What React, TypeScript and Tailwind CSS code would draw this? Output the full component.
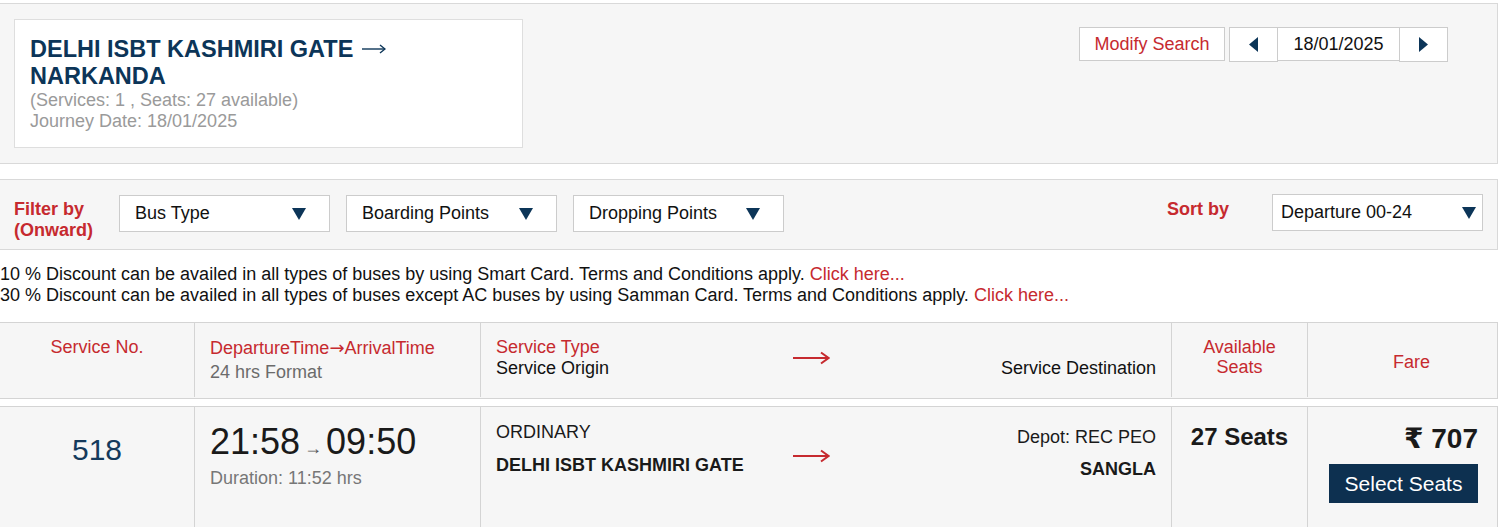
import React from 'react';

const NAVY = 'text-[#0c3558]';

const Caret = () => (
  <svg width="14" height="12" viewBox="0 0 14 12" className="shrink-0">
    <polygon points="0,0 14,0 7,12" fill="#0c3558" />
  </svg>
);

const LongArrow = () => (
  <svg width="37" height="14" viewBox="0 0 37 14" className="shrink-0">
    <line x1="0" y1="7" x2="35" y2="7" stroke="#c62a2f" strokeWidth="2" />
    <polyline points="28,1.5 35.5,7 28,12.5" fill="none" stroke="#c62a2f" strokeWidth="2" />
  </svg>
);

const Select = ({ label, pad = 'pl-[15px] pr-[23px]' }: { label: string; pad?: string }) => (
  <div className={`w-[211px] h-[37px] bg-white border border-[#cccccc] flex items-center justify-between ${pad} text-[18px] text-[#111]`}>
    <span>{label}</span>
    <Caret />
  </div>
);

const App = () => {
  return (
    <div className="w-[1501px] min-h-[527px] bg-white pt-[3px] font-['Liberation_Sans',Arial,'DejaVu_Sans',sans-serif] text-[18px] leading-[21px]">
      {/* search summary */}
      <div className="w-[1498px] h-[161px] bg-[#f6f6f6] border-y border-r border-[#d9d9d9] flex justify-between pl-[14px] pt-[15px] pr-[49px]">
        <div className="w-[509px] h-[129px] bg-white border border-[#dedede] px-[15px] pt-[16px]">
          <h1 className={`text-[23.5px] leading-[27px] font-bold ${NAVY}`}>
            DELHI ISBT KASHMIRI GATE{' '}
            <svg width="24" height="10" viewBox="0 0 24 10" className="inline-block align-[3px] ml-[2px]">
              <line x1="0" y1="5" x2="23" y2="5" stroke="#0c3558" strokeWidth="1.4" />
              <polyline points="18,1 23,5 18,9" fill="none" stroke="#0c3558" strokeWidth="1.4" />
            </svg>{' '}
            NARKANDA
          </h1>
          <p className="text-[#9a9a9a]">(Services: 1 , Seats: 27 available)</p>
          <p className="text-[#9a9a9a]">Journey Date: 18/01/2025</p>
        </div>
        <div className="flex items-start gap-[4px] pt-[8px]">
          <button className="w-[146px] h-[34px] bg-white border border-[#cccccc] text-[#c62a2f] text-[18px]">
            Modify Search
          </button>
          <div className="flex items-start">
            <button className="w-[49px] h-[35px] bg-white border border-[#cccccc] flex items-center justify-center">
              <svg width="9" height="15" viewBox="0 0 9 15"><polygon points="9,0 9,15 0,7.5" fill="#0c3558" /></svg>
            </button>
            <div className="w-[121px] h-[34px] bg-white border-y border-[#cccccc] flex items-center justify-center text-[#111]">
              18/01/2025
            </div>
            <button className="w-[49px] h-[35px] bg-white border border-[#cccccc] flex items-center justify-center">
              <svg width="9" height="15" viewBox="0 0 9 15"><polygon points="0,0 0,15 9,7.5" fill="#0c3558" /></svg>
            </button>
          </div>
        </div>
      </div>

      {/* filter bar */}
      <div className="mt-[15px] w-[1498px] h-[71px] bg-[#f6f6f6] border-y border-r border-[#d9d9d9] flex justify-between pl-[14px] pr-[14px] pt-[15px]">
        <div className="flex items-start">
          <div className="w-[105px] mt-[4px] font-bold text-[#c62a2f]">
            Filter by
            <br />
            (Onward)
          </div>
          <div className="flex gap-[16px]">
            <Select label="Bus Type" />
            <Select label="Boarding Points" />
            <Select label="Dropping Points" />
          </div>
        </div>
        <div className="flex items-start">
          <div className="w-[105px] mt-[4px] font-bold text-[#c62a2f]">Sort by</div>
          <div className="-mt-[1px]">
            <Select label="Departure 00-24" pad="pl-[8px] pr-[6px]" />
          </div>
        </div>
      </div>

      {/* discount notes */}
      <div className="mt-[14px] text-[#111]">
        <p>
          10 % Discount can be availed in all types of buses by using Smart Card. Terms and Conditions apply.{' '}
          <a className="text-[#c62a2f]">Click here...</a>
        </p>
        <p>
          30 % Discount can be availed in all types of buses except AC buses by using Samman Card. Terms and Conditions apply.{' '}
          <a className="text-[#c62a2f]">Click here...</a>
        </p>
      </div>

      {/* table header */}
      <div className="mt-[16px] w-[1498px] h-[77px] bg-[#f6f6f6] border-y border-r border-[#d4d4d4] grid grid-cols-[194px_286px_691px_136px_1fr] items-start">
        <div className="h-[74px] pt-[14px] text-center text-[#c62a2f]">Service No.</div>
        <div className="h-[74px] border-l border-[#d4d4d4] pt-[14px] pl-[15px]">
          <div className="text-[#c62a2f]">
            DepartureTime<span className="font-['DejaVu_Sans'] text-[18px]">→</span>ArrivalTime
          </div>
          <div className="text-[#6b6b6b] mt-[3px]">24 hrs Format</div>
        </div>
        <div className="h-[74px] border-l border-[#d4d4d4] pt-[14px] pl-[15px] pr-[15px] flex">
          <div className="w-[297px]">
            <div className="text-[#c62a2f]">Service Type</div>
            <div className="text-[#111]">Service Origin</div>
          </div>
          <div className="mt-[14px]">
            <LongArrow />
          </div>
          <div className="flex-1 text-right text-[#111] pt-[21px]">Service Destination</div>
        </div>
        <div className="h-[74px] border-l border-[#d4d4d4] pt-[14px] text-center text-[#c62a2f] leading-[20px]">
          Available
          <br />
          Seats
        </div>
        <div className="h-[74px] border-l border-[#d4d4d4] flex items-center justify-center text-[#c62a2f] pl-[18px] pt-[4px]">
          Fare
        </div>
      </div>

      {/* service row */}
      <div className="mt-[7px] w-[1498px] h-[130px] bg-[#f6f6f6] border-t border-r border-[#d4d4d4] grid grid-cols-[194px_286px_691px_136px_1fr]">
        <div className="pt-[26px] text-center text-[30px] leading-[34px] text-[#143a5c]">518</div>
        <div className="border-l border-[#d4d4d4] pt-[14px] pl-[15px]">
          <div className="text-[36px] leading-[42px] text-[#1a1a1a]">
            21:58<span className="text-[18px] text-[#555] mx-[4px]">→</span>09:50
          </div>
          <div className="text-[#777777] mt-[-1px]">Duration: 11:52 hrs</div>
        </div>
        <div className="border-l border-[#d4d4d4] pl-[15px] pr-[15px] flex">
          <div className="w-[297px] pt-[15px]">
            <div className="text-[#1a1a1a]">ORDINARY</div>
            <div className="mt-[12px] font-bold text-[#1a1a1a]">DELHI ISBT KASHMIRI GATE</div>
          </div>
          <div className="mt-[42px]">
            <LongArrow />
          </div>
          <div className="flex-1 text-right pt-[20px]">
            <div className="text-[#1a1a1a]">Depot: REC PEO</div>
            <div className="mt-[11px] font-bold text-[#1a1a1a]">SANGLA</div>
          </div>
        </div>
        <div className="border-l border-[#d4d4d4] pt-[16px] text-center text-[24px] leading-[28px] font-bold text-[#1a1a1a]">
          27 Seats
        </div>
        <div className="border-l border-[#d4d4d4] pt-[16px] pr-[19px] flex flex-col items-end">
          <div className="text-[28px] leading-[32px] font-bold text-[#1a1a1a]">₹ 707</div>
          <button className="mt-[9px] w-[149px] h-[39px] bg-[#0d3050] text-white text-[21px]">Select Seats</button>
        </div>
      </div>
    </div>
  );
};

export default App;
